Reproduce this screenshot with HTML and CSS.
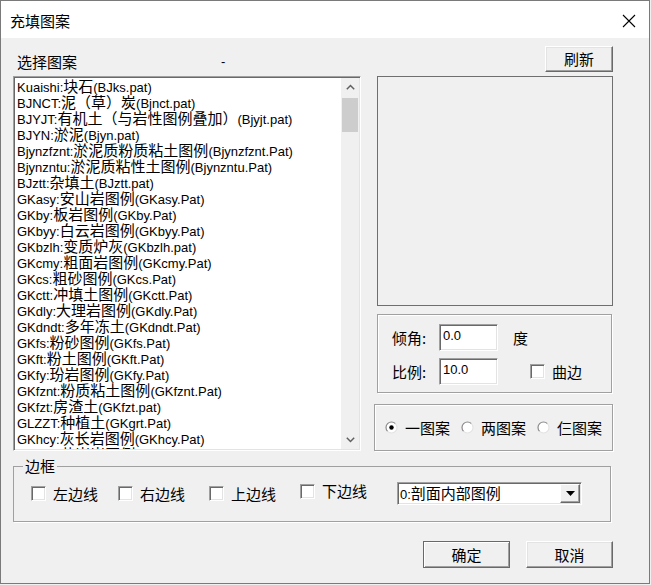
FILE: index.html
```html
<!DOCTYPE html>
<html>
<head>
<meta charset="utf-8">
<title>充填图案</title>
<link rel="stylesheet" href="styles.css">
</head>
<body>
<div class="win">
  <div class="titlebar">
    <span class="title">充填图案</span>
    <svg class="close" width="14" height="14" viewBox="0 0 14 14"><path d="M1 1L13 13M13 1L1 13" stroke="#000" stroke-width="1.1" fill="none"/></svg>
  </div>
  <div class="content">
    <div class="head">
      <span class="lbl">选择图案</span>
      <span class="dash">-</span>
      <button class="btn refresh">刷新</button>
    </div>
    <div class="main">
      <div class="listbox">
        <ul class="items">
          <li>Kuaishi:<span class="c">块石</span>(BJks.pat)</li>
          <li>BJNCT:<span class="c">泥（草）炭</span>(Bjnct.pat)</li>
          <li>BJYJT:<span class="c">有机土（与岩性图例叠加）</span>(Bjyjt.pat)</li>
          <li>BJYN:<span class="c">淤泥</span>(Bjyn.pat)</li>
          <li>Bjynzfznt:<span class="c">淤泥质粉质粘土图例</span>(Bjynzfznt.Pat)</li>
          <li>Bjynzntu:<span class="c">淤泥质粘性土图例</span>(Bjynzntu.Pat)</li>
          <li>BJztt:<span class="c">杂填土</span>(BJztt.pat)</li>
          <li>GKasy:<span class="c">安山岩图例</span>(GKasy.Pat)</li>
          <li>GKby:<span class="c">板岩图例</span>(GKby.Pat)</li>
          <li>GKbyy:<span class="c">白云岩图例</span>(GKbyy.Pat)</li>
          <li>GKbzlh:<span class="c">变质炉灰</span>(GKbzlh.pat)</li>
          <li>GKcmy:<span class="c">粗面岩图例</span>(GKcmy.Pat)</li>
          <li>GKcs:<span class="c">粗砂图例</span>(GKcs.Pat)</li>
          <li>GKctt:<span class="c">冲填土图例</span>(GKctt.Pat)</li>
          <li>GKdly:<span class="c">大理岩图例</span>(GKdly.Pat)</li>
          <li>GKdndt:<span class="c">多年冻土</span>(GKdndt.Pat)</li>
          <li>GKfs:<span class="c">粉砂图例</span>(GKfs.Pat)</li>
          <li>GKft:<span class="c">粉土图例</span>(GKft.Pat)</li>
          <li>GKfy:<span class="c">玢岩图例</span>(GKfy.Pat)</li>
          <li>GKfznt:<span class="c">粉质粘土图例</span>(GKfznt.Pat)</li>
          <li>GKfzt:<span class="c">房渣土</span>(GKfzt.pat)</li>
          <li>GLZZT:<span class="c">种植土</span>(GKgrt.Pat)</li>
          <li>GKhcy:<span class="c">灰长岩图例</span>(GKhcy.Pat)</li>
          <li>GKhgy:<span class="c">花岗岩图例</span>(GKhgy.Pat)</li>
        </ul>
        <div class="vscroll">
          <div class="arrow"><svg width="9" height="6" viewBox="0 0 9 6"><path d="M0.8 5.2L4.5 1.5L8.2 5.2" stroke="#606060" stroke-width="1.5" fill="none"/></svg></div>
          <div class="thumb"></div>
          <div class="track"></div>
          <div class="arrow"><svg width="9" height="6" viewBox="0 0 9 6"><path d="M0.8 0.8L4.5 4.5L8.2 0.8" stroke="#606060" stroke-width="1.5" fill="none"/></svg></div>
        </div>
      </div>
      <div class="side">
        <div class="preview"></div>
        <div class="group params">
          <div class="prow">
            <span class="plbl">倾角:</span>
            <div class="edit">0.0</div>
            <span class="unit">度</span>
          </div>
          <div class="prow">
            <span class="plbl">比例:</span>
            <div class="edit">10.0</div>
            <span class="cb curve"></span>
            <span class="cblbl">曲边</span>
          </div>
        </div>
        <div class="group radios">
          <div class="ropt">
            <svg width="13" height="13" viewBox="0 0 13 13"><circle cx="6.5" cy="6.5" r="5.5" fill="#fff"/><path d="M2.61 10.39A5.5 5.5 0 0 1 10.39 2.61" stroke="#8a8a8a" stroke-width="1.2" fill="none"/><path d="M10.39 2.61A5.5 5.5 0 0 1 2.61 10.39" stroke="#e3e3e3" stroke-width="1.2" fill="none"/><circle cx="6.5" cy="6.5" r="2.2" fill="#000"/></svg>
            <span>一图案</span>
          </div>
          <div class="ropt">
            <svg width="13" height="13" viewBox="0 0 13 13"><circle cx="6.5" cy="6.5" r="5.5" fill="#fff"/><path d="M2.61 10.39A5.5 5.5 0 0 1 10.39 2.61" stroke="#8a8a8a" stroke-width="1.2" fill="none"/><path d="M10.39 2.61A5.5 5.5 0 0 1 2.61 10.39" stroke="#e3e3e3" stroke-width="1.2" fill="none"/></svg>
            <span>两图案</span>
          </div>
          <div class="ropt">
            <svg width="13" height="13" viewBox="0 0 13 13"><circle cx="6.5" cy="6.5" r="5.5" fill="#fff"/><path d="M2.61 10.39A5.5 5.5 0 0 1 10.39 2.61" stroke="#8a8a8a" stroke-width="1.2" fill="none"/><path d="M10.39 2.61A5.5 5.5 0 0 1 2.61 10.39" stroke="#e3e3e3" stroke-width="1.2" fill="none"/></svg>
            <span>仨图案</span>
          </div>
        </div>
      </div>
    </div>
    <fieldset class="frame">
      <legend>边框</legend>
      <div class="frow">
        <div class="chk"><span class="cb"></span><span>左边线</span></div>
        <div class="chk"><span class="cb"></span><span>右边线</span></div>
        <div class="chk"><span class="cb"></span><span>上边线</span></div>
        <div class="chk up"><span class="cb"></span><span>下边线</span></div>
        <div class="combo">
          <span class="ctext"><span class="lat">0:</span>剖面内部图例</span>
          <span class="drop"><svg width="9" height="5" viewBox="0 0 9 5"><path d="M0 0H9L4.5 5Z" fill="#000"/></svg></span>
        </div>
      </div>
    </fieldset>
    <div class="actions">
      <button class="btn default">确定</button>
      <button class="btn">取消</button>
    </div>
  </div>
</div>
</body>
</html>
```
FILE: styles.css
```css
* { box-sizing: border-box; }
html, body { margin: 0; padding: 0; background: #f0f0f0; }
body {
  width: 651px;
  height: 585px;
  overflow: hidden;
  font-family: "Noto Sans CJK SC", "Liberation Sans", sans-serif;
  font-size: 15px;
  color: #000;
}
.win {
  width: 650px;
  height: 584px;
  border: 1px solid #7a7a7a;
  background: #f0f0f0;
}
.titlebar {
  height: 37px;
  background: #fff;
  display: flex;
  align-items: center;
  justify-content: space-between;
  padding: 0 13px 0 9px;
}
.title { font-size: 15px; line-height: 16px; margin-top: 2px; }
.close { display: block; margin-top: 2px; }

.content { padding: 0 36px 0 12px; }

.head {
  height: 38px;
  display: flex;
  align-items: flex-start;
}
.lbl { margin: 16px 0 0 4px; line-height: 16px; white-space: nowrap; }
.dash {
  font-family: "Liberation Sans", sans-serif;
  font-size: 13px;
  line-height: 16px;
  margin: 16px 0 0 144px;
}

.btn {
  font-family: "Noto Sans CJK SC", sans-serif;
  font-size: 15px;
  line-height: 16px;
  color: #000;
  background: #f0f0f0;
  padding: 0;
  border: 1px solid;
  border-color: #fff #696969 #696969 #fff;
  box-shadow: inset -1px -1px 0 #a0a0a0, inset 1px 1px 0 #e3e3e3;
  display: flex;
  align-items: center;
  justify-content: center;
  white-space: nowrap;
}
.refresh { margin: 8px 0 0 auto; width: 68px; height: 26px; }

.main {
  display: flex;
  gap: 16px;
  height: 375px;
}
.listbox {
  width: 348px;
  height: 375px;
  flex: none;
  display: flex;
  border: 1px solid;
  border-color: #a0a0a0 #fff #fff #a0a0a0;
  box-shadow: inset 1px 1px 0 #696969, inset -1px -1px 0 #e3e3e3;
  padding: 1px;
}
.items {
  flex: 1;
  margin: 0;
  padding: 0 0 0 2px;
  list-style: none;
  background: #fff;
  overflow: hidden;
  font-family: "Liberation Sans", "Noto Sans CJK SC", sans-serif;
  font-size: 13px;
  line-height: 16px;
}
.items li { height: 16px; white-space: nowrap; }
.items .c { font-family: "Noto Sans CJK SC", sans-serif; font-size: 15px; line-height: 16px; }

.vscroll {
  width: 18px;
  flex: none;
  background: #f0f0f0;
  display: flex;
  flex-direction: column;
}
.arrow {
  height: 18px;
  display: flex;
  align-items: center;
  justify-content: center;
}
.thumb {
  height: 34px;
  margin: 2px 1px 0 1px;
  background: #cdcdcd;
}
.track { flex: 1; }

.side {
  width: 236px;
  flex: none;
  display: flex;
  flex-direction: column;
}
.preview {
  height: 230px;
  flex: none;
  border: 1px solid #6f6f6f;
}
.group {
  border: 1px solid #a0a0a0;
  box-shadow: inset 1px 1px 0 #fff, 1px 1px 0 #fff;
  flex: none;
}
.params {
  margin-top: 8px;
  width: 235px;
  height: 79px;
  padding: 9px 0 0 14px;
  display: flex;
  flex-direction: column;
  gap: 7px;
}
.prow {
  display: flex;
  align-items: center;
  height: 27px;
  white-space: nowrap;
}
.plbl { width: 47px; flex: none; line-height: 16px; }
.edit {
  width: 59px;
  height: 27px;
  flex: none;
  background: #fff;
  border: 1px solid;
  border-color: #a0a0a0 #fff #fff #a0a0a0;
  box-shadow: inset 1px 1px 0 #696969, inset -1px -1px 0 #e3e3e3;
  font-family: "Liberation Sans", sans-serif;
  font-size: 13px;
  line-height: 16px;
  padding: 3px 0 0 3px;
}
.unit { margin-left: 15px; line-height: 16px; }
.cb {
  display: inline-block;
  width: 15px;
  height: 15px;
  background: #fff;
  border: 1px solid;
  border-color: #a0a0a0 #fff #fff #a0a0a0;
  box-shadow: inset 1px 1px 0 #696969, inset -1px -1px 0 #e3e3e3;
  flex: none;
}
.curve { margin-left: 32px; }
.cblbl { margin-left: 7px; line-height: 16px; }

.radios {
  margin-top: 11px;
  margin-left: -3px;
  width: 239px;
  height: 47px;
  display: flex;
  align-items: center;
  padding: 0 0 0 10px;
  white-space: nowrap;
}
.ropt { display: flex; flex: none; align-items: center; gap: 7px; margin-right: 11px; line-height: 16px; }
.ropt:last-child { margin-right: 0; }
.ropt svg { display: block; flex: none; }

.frame {
  margin: 7px 0 0 0;
  width: 598px;
  padding: 0;
  border: 1px solid #a0a0a0;
  box-shadow: 1px 1px 0 #fff;
  min-width: 0;
}
.frame legend {
  margin-left: 9px;
  padding: 0 2px;
  line-height: 16px;
  font-size: 15px;
}
.frow {
  display: grid;
  grid-template-columns: 87px 91px 91px 97px 185px;
  align-items: center;
  padding: 8px 0 16px 17px;
  white-space: nowrap;
}
.chk { display: flex; align-items: center; gap: 7px; line-height: 16px; }
.chk.up { margin-top: -5px; }
.combo {
  width: 185px;
  height: 23px;
  display: flex;
  align-items: center;
  background: #fff;
  border: 1px solid;
  border-color: #a0a0a0 #fff #fff #a0a0a0;
  box-shadow: inset 1px 1px 0 #696969, inset -1px -1px 0 #e3e3e3;
  padding: 1px;
}
.ctext { flex: 1; padding-left: 1px; line-height: 16px; }
.lat { font-family: "Liberation Sans", sans-serif; font-size: 13px; }
.drop {
  width: 20px;
  height: 19px;
  flex: none;
  background: #f0f0f0;
  border: 1px solid;
  border-color: #fff #696969 #696969 #fff;
  box-shadow: inset -1px -1px 0 #a0a0a0;
  display: flex;
  align-items: center;
  justify-content: center;
}
.drop svg { display: block; }

.actions {
  display: flex;
  justify-content: flex-end;
  gap: 16px;
  margin-top: 19px;
}
.actions .btn { width: 87px; height: 27px; }
.btn.default {
  border: 1px solid #696969;
  box-shadow: inset 1px 1px 0 #fff, inset -1px -1px 0 #a0a0a0;
}
```
